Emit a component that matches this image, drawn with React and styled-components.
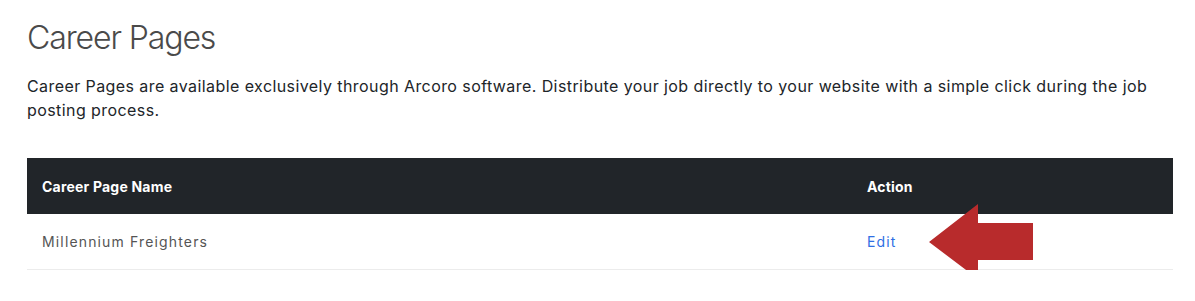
import React from 'react';
import styled, { createGlobalStyle } from 'styled-components';

const GlobalStyle = createGlobalStyle`
  body {
    margin: 0;
    background: #fff;
    font-family: Inter, "Open Sans", sans-serif;
  }
`;

const rows = [
  { name: 'Millennium Freighters' },
];

function App() {
  return (
    <>
      <GlobalStyle />
      <Page>
        <Title>Career Pages</Title>
        <Intro>
          Career Pages are available exclusively through Arcoro software. Distribute your job directly to your website with a simple click during the job posting process.
        </Intro>
        <TableWrap>
          <Table>
            <thead>
              <tr>
                <Th>Career Page Name</Th>
                <Th $action>Action</Th>
              </tr>
            </thead>
            <tbody>
              {rows.map(row => (
                <tr key={row.name}>
                  <Td>{row.name}</Td>
                  <Td $action><EditLink href="#">Edit</EditLink></Td>
                </tr>
              ))}
            </tbody>
          </Table>
          <Arrow viewBox="0 0 104 75" width="104" height="75">
            <polygon points="0,38 49,0 49,19 104,19 104,56 49,56 49,75" fill="#b82b2c" />
          </Arrow>
        </TableWrap>
      </Page>
    </>
  );
}

const Page = styled.div`
  padding: 18px 22px 0 27px;
`;

const Title = styled.h1`
  margin: 0;
  font-size: 32px;
  font-weight: 350;
  line-height: 40px;
  letter-spacing: -1.1px;
  color: #4a4a4a;
`;

const Intro = styled.p`
  margin: 16px 0 0;
  font-size: 16px;
  line-height: 24px;
  letter-spacing: 0.42px;
  color: #212529;
`;

const TableWrap = styled.div`
  position: relative;
  margin-top: 36px;
`;

const Table = styled.table`
  width: 100%;
  border-collapse: collapse;
  font-size: 14px;
`;

const Th = styled.th`
  height: 56px;
  padding: 0 15px;
  background: #212529;
  color: #fff;
  font-weight: 700;
  text-align: left;
  letter-spacing: 0.2px;
  width: ${p => (p.$action ? '291px' : 'auto')};
  padding-left: ${p => (p.$action ? '0' : '15px')};
`;

const Td = styled.td`
  height: 55px;
  padding: 0 15px;
  padding-left: ${p => (p.$action ? '0' : '15px')};
  border-bottom: 1px solid #ececec;
  color: #555;
  letter-spacing: 1.15px;
`;

const EditLink = styled.a`
  color: #2f6fe4;
  text-decoration: none;
`;

const Arrow = styled.svg`
  position: absolute;
  left: 902px;
  top: 46px;
`;

export default App;
